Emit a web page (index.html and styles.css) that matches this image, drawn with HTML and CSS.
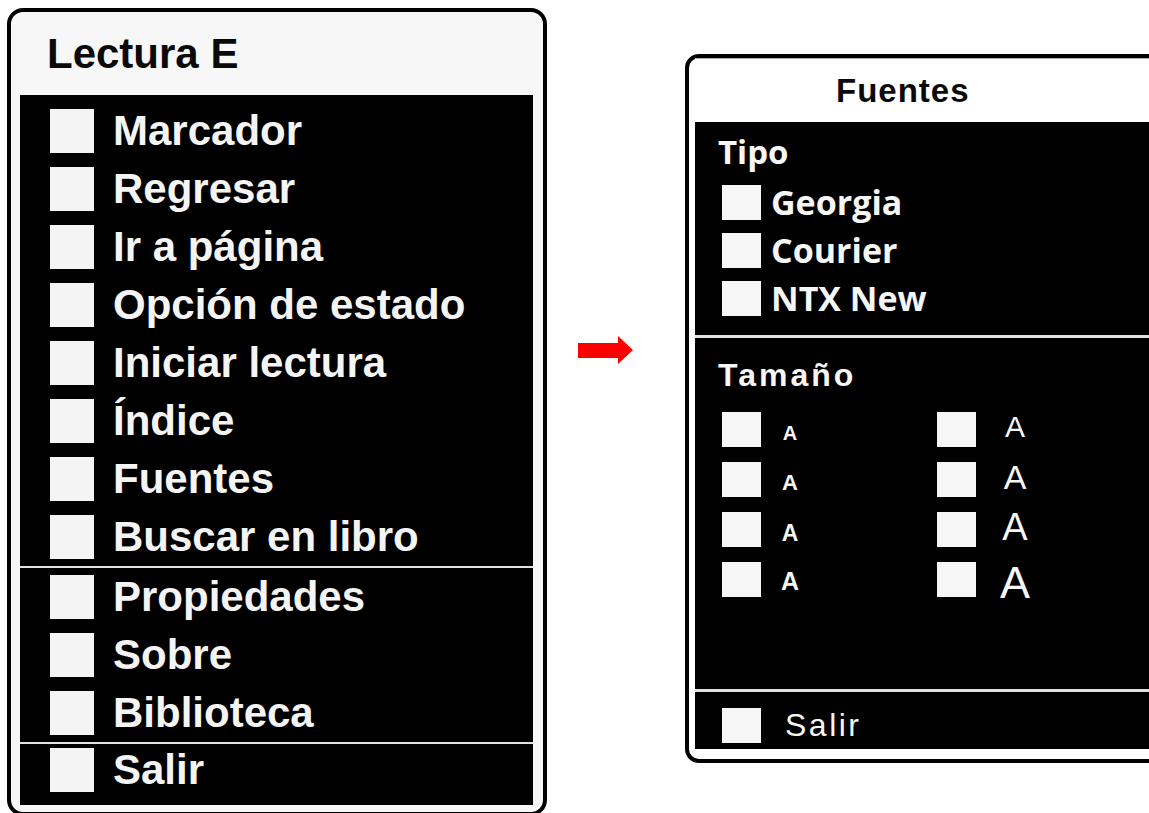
FILE: index.html
```html
<!doctype html>
<html>
<head>
<meta charset="utf-8">
<title>Lectura E - Fuentes</title>
<link rel="stylesheet" href="styles.css">
</head>
<body>
	<div class="menu">
		<div class="menu-title">Lectura E</div>
		<div class="menu-body">
			<ul class="group group-main">
				<li><span class="box"></span>Marcador</li>
				<li><span class="box"></span>Regresar</li>
				<li><span class="box"></span>Ir a página</li>
				<li><span class="box"></span>Opción de estado</li>
				<li><span class="box"></span>Iniciar lectura</li>
				<li><span class="box"></span>Índice</li>
				<li><span class="box"></span>Fuentes</li>
				<li><span class="box"></span>Buscar en libro</li>
			</ul>
			<ul class="group group-info">
				<li><span class="box"></span>Propiedades</li>
				<li><span class="box"></span>Sobre</li>
				<li><span class="box"></span>Biblioteca</li>
			</ul>
			<ul class="group group-exit">
				<li><span class="box"></span>Salir</li>
			</ul>
		</div>
	</div>

	<svg class="arrow" width="55" height="28" viewBox="0 0 55 28">
		<polygon points="0,7 40,7 40,0 55,14 40,28 40,22 0,22" fill="#ff0000"/>
	</svg>

	<div class="fonts">
		<div class="fonts-title">Fuentes</div>
		<div class="fonts-body">
			<div class="section section-type">
				<div class="section-label">Tipo</div>
				<ul class="type-list">
					<li><span class="sbox"></span>Georgia</li>
					<li><span class="sbox"></span>Courier</li>
					<li><span class="sbox"></span>NTX New</li>
				</ul>
			</div>
			<div class="section section-size">
				<div class="section-label label-arial">Tamaño</div>
				<div class="size-grid">
					<div class="size"><span class="sbox"></span><span class="a-small s1">A</span></div>
					<div class="size"><span class="sbox"></span><span class="a-big b1">A</span></div>
					<div class="size"><span class="sbox"></span><span class="a-small s2">A</span></div>
					<div class="size"><span class="sbox"></span><span class="a-big b2">A</span></div>
					<div class="size"><span class="sbox"></span><span class="a-small s3">A</span></div>
					<div class="size"><span class="sbox"></span><span class="a-big b3">A</span></div>
					<div class="size"><span class="sbox"></span><span class="a-small s4">A</span></div>
					<div class="size"><span class="sbox"></span><span class="a-big b4">A</span></div>
				</div>
			</div>
			<div class="section section-exit">
				<div class="exit-row"><span class="sbox"></span>Salir</div>
			</div>
		</div>
	</div>
</body>
</html>
```

FILE: styles.css
```css
*{
	margin:0;
	padding:0;
}
body{
	background:#fff;
	overflow:hidden;
	display:flex;
	align-items:flex-start;
	font-family:"Liberation Sans", Arial, sans-serif;
}
ul{
	list-style:none;
}

/* left menu */
.menu{
	flex-shrink:0;
	width:513px;
	height:793px;
	margin:8px 0 0 7px;
	border:4px solid #000;
	border-radius:16px;
	background:#f7f7f7;
	display:flex;
	flex-direction:column;
	padding:0 10px 7px 9px;
}
.menu-title{
	flex-shrink:0;
	height:83px;
	display:flex;
	align-items:center;
	padding-left:27px;
	font-size:42px;
	font-weight:bold;
	letter-spacing:0;
	color:#0a0a0a;
}
.menu-body{
	flex:1;
	background:#000;
	display:flex;
	flex-direction:column;
}
.group li{
	height:58px;
	display:flex;
	align-items:center;
	font-size:42px;
	font-weight:bold;
	color:#f4f4f4;
}
.box{
	width:44px;
	height:44px;
	background:#f4f4f4;
	margin:0 19px 0 30px;
	flex-shrink:0;
}
.group-main{
	padding-top:7px;
}
.group-info{
	border-top:2px solid #e2e2e2;
}
.group-exit{
	border-top:2px solid #e2e2e2;
	flex:1;
}
.group-exit li{
	height:52px;
}

.arrow{
	flex-shrink:0;
	margin:336px 0 0 31px;
}

/* right panel */
.fonts{
	flex-shrink:0;
	width:520px;
	margin:54px 0 0 52px;
	border:4px solid #000;
	border-radius:14px;
	background:#fff;
	padding:0 6px 10px 6px;
	display:flex;
	flex-direction:column;
}
.fonts-title{
	flex-shrink:0;
	height:64px;
	border-top:1px solid #aaa;
	box-sizing:border-box;
	display:flex;
	align-items:center;
	padding-left:141px;
	font-size:33px;
	font-weight:bold;
	letter-spacing:1px;
	color:#0a0a0a;
}
.fonts-body{
	height:627px;
	background:#000;
	display:flex;
	flex-direction:column;
	color:#f6f6f6;
}
.section{
	padding-left:23px;
}
.section-label{
	height:38px;
	display:flex;
	align-items:center;
	font-family:"Open Sans", "Liberation Sans", sans-serif;
	font-weight:bold;
	font-size:33px;
}
.label-arial{
	font-family:"Liberation Sans", Arial, sans-serif;
	font-size:32px;
	letter-spacing:3px;
}
.section-type{
	height:213px;
	padding-top:10px;
	box-sizing:border-box;
}
.type-list{
	margin-top:8px;
}
.type-list li{
	height:48px;
	display:flex;
	align-items:center;
	font-family:"Open Sans", "Liberation Sans", sans-serif;
	font-weight:bold;
	font-size:34px;
}
.sbox{
	width:39px;
	height:35px;
	background:#f6f6f6;
	margin:0 10px 0 4px;
	flex-shrink:0;
}
.section-size{
	flex:1;
	border-top:3px solid #e2e2e2;
	padding-top:18px;
}
.size-grid{
	margin-top:10px;
	display:grid;
	grid-template-columns:215px auto;
	grid-auto-rows:50px;
}
.size{
	display:flex;
	align-items:center;
}
.a-small{
	width:38px;
	text-align:center;
	font-weight:bold;
	line-height:1;
	padding-top:8px;
}
.a-big{
	width:58px;
	text-align:center;
	line-height:1;
	padding-bottom:4px;
}
.s1{ font-size:20px; }
.s2{ font-size:22px; }
.s3{ font-size:23px; }
.s4{ font-size:25px; padding-top:4px; }
.b1{ font-size:30px; }
.b2{ font-size:34px; }
.b3{ font-size:38px; }
.b4{ font-size:45px; padding:6px 0 0; }
.section-exit{
	height:60px;
	border-top:3px solid #e2e2e2;
	box-sizing:border-box;
	padding-top:9px;
}
.exit-row{
	height:48px;
	display:flex;
	align-items:center;
	font-size:32px;
	letter-spacing:2.5px;
}
.exit-row .sbox{
	margin-right:24px;
}
```
